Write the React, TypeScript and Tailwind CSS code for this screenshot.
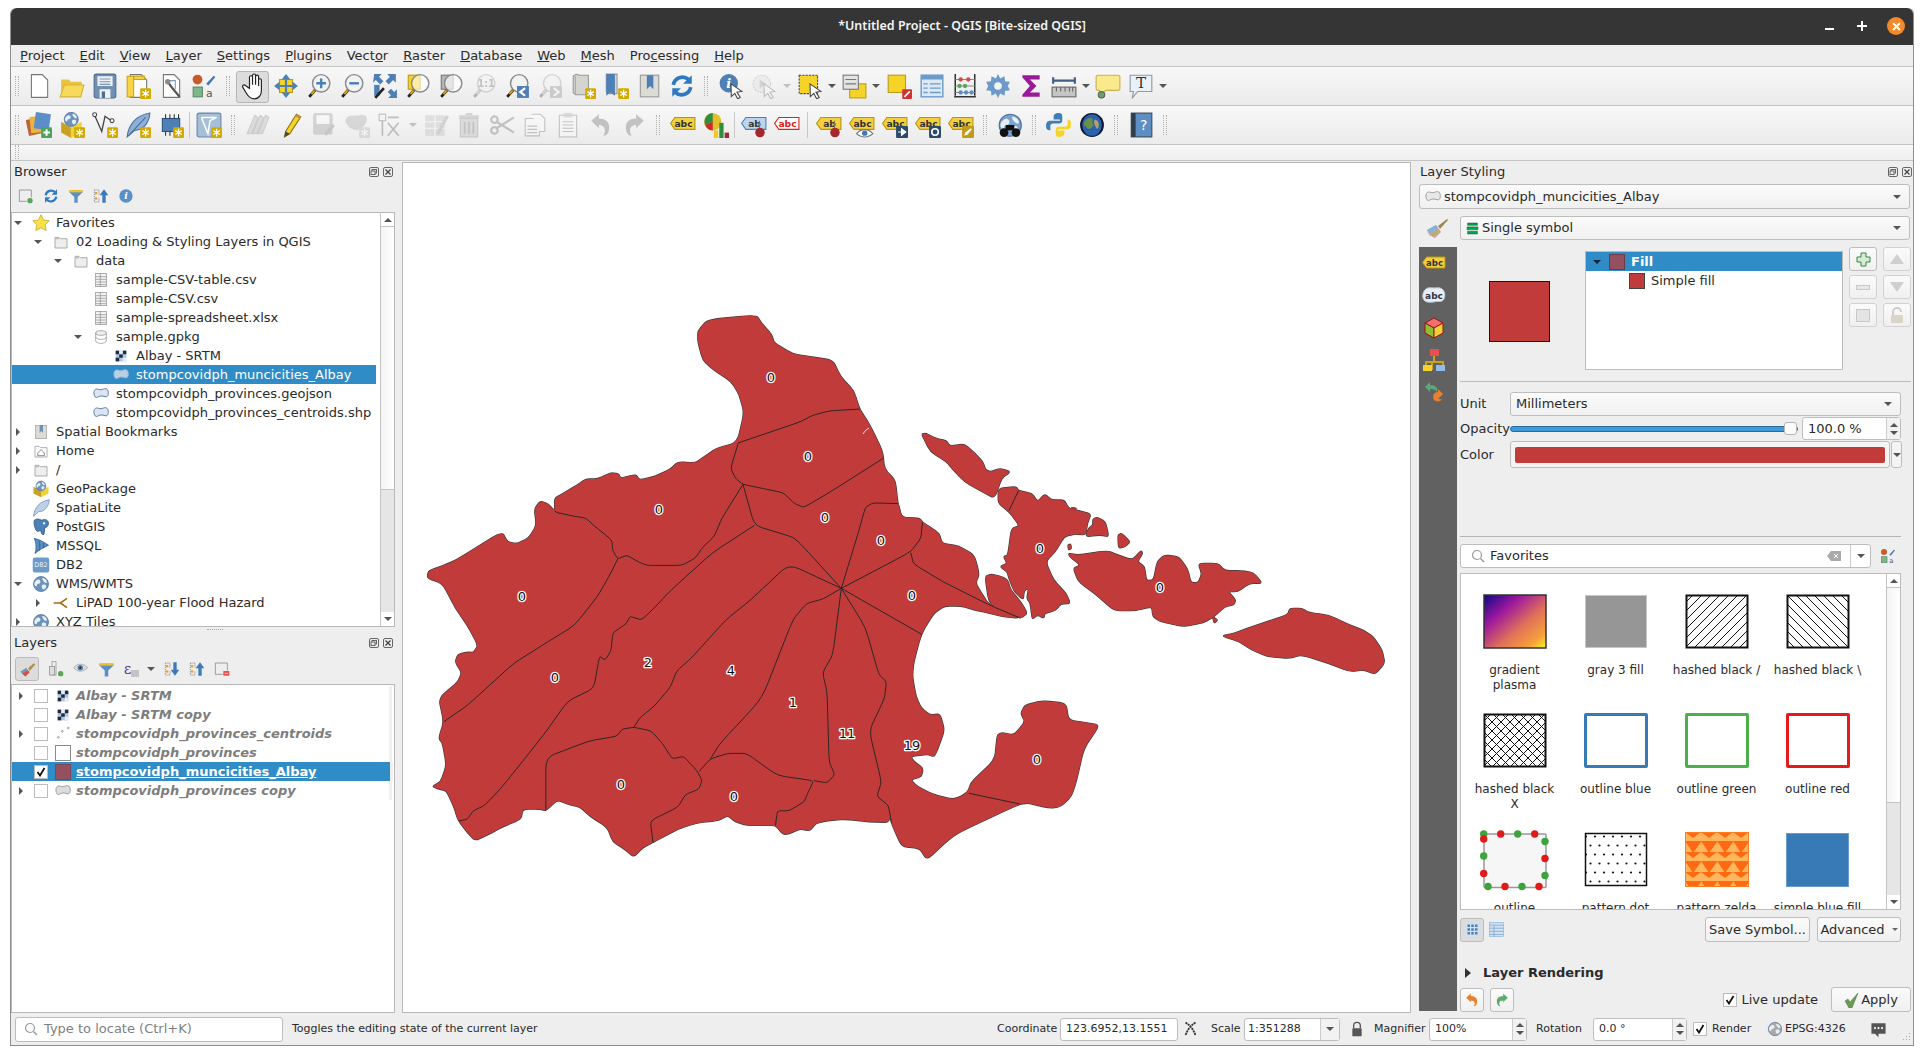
import type { ReactNode } from 'react';

const RED = '#c23b3b';

function Svg({ s = 24, children, off }: { s?: number; children: ReactNode; off?: boolean }) {
  return (
    <svg width={s} height={s} viewBox="0 0 24 24" className={`block shrink-0 ${off ? 'opacity-30 grayscale' : ''}`}>
      {children}
    </svg>
  );
}

const Badge = ({ c = '#d4a900' }: { c?: string }) => (
  <g>
    <rect x="14" y="14" width="10" height="10" rx="1" fill={c} />
    <path d="M19 15.5v7M16 17.2l6 3.6M22 17.2l-6 3.6" stroke="#fff" strokeWidth="1.2" />
  </g>
);
const Lens = ({ tint = '#f2f2f2', children }: { tint?: string; children?: ReactNode }) => (
  <g>
    <path d="M9 15 3 22" stroke="#222" strokeWidth="2.6" />
    <path d="M8 16 5 19.5" stroke="#e0a100" strokeWidth="2" />
    <circle cx="14" cy="9.5" r="8" fill={tint} stroke="#8a8a8a" strokeWidth="1.3" />
    {children}
  </g>
);
const Cursor = () => <path d="M12 10l10 7-4.5.6 3 5-2.4 1.2-2.6-5-3.2 3z" fill="#fff" stroke="#444" strokeWidth="1" />;
const Doc = () => <path d="M5 1.5h10l5 5v16H5z" fill="#fff" stroke="#777" />;
const Tag = ({ t = 'abc', c = '#f4d03f', b = '#b8960a', tc = '#333' }: { t?: string; c?: string; b?: string; tc?: string }) => (
  <g>
    <path d="M4.5 5H23v11H4.5L0.5 10.5z" fill={c} stroke={b} />
    <text x="12.5" y="13.8" fontSize="8.5" textAnchor="middle" fill={tc} fontFamily="DejaVu Sans" fontWeight="700">{t}</text>
  </g>
);
const Pin = () => <g><path d="M17 8v9" stroke="#777" /><circle cx="17.5" cy="19" r="4.4" fill="#a5282c" /></g>;
const Poly = ({ f = '#dbe4ef', b = '#55789e' }: { f?: string; b?: string }) => (
  <path d="M2 7C5 2 8 6 12 5.500 16 5 19 2 22 6c2 4 1 12-4 10-4-1.500-8-1.500-11.500 1C3 19 0 12 2 7z" fill={f} stroke={b} strokeWidth="1.400" />
);
const Globe = ({ c = '#6b93bd' }: { c?: string }) => (
  <g>
    <circle cx="12" cy="12" r="10" fill={c} stroke="#4d7199" />
    <path d="M5 8c3-3 5-2 6 0s-1 4-3 4-1 4-3 3-3-4 0-7zM14 4c3 0 6 3 6 6-2 1-3 0-4-1s-3-3-2-5zM14 13c3-1 5 0 5 2s-2 5-4 4-3-5-1-6z" fill="#e8eef5" />
  </g>
);
const Checker = () => (
  <g>
    <rect x="4" y="4" width="16" height="16" fill="#b4c6dc" />
    <rect x="4" y="4" width="5.300" height="5.300" fill="#1d2b44" />
    <rect x="14.600" y="4" width="5.400" height="5.300" fill="#1d2b44" />
    <rect x="9.300" y="9.300" width="5.300" height="5.300" fill="#1d2b44" />
    <rect x="4" y="14.600" width="5.300" height="5.400" fill="#1d2b44" />
    <rect x="14.600" y="14.600" width="5.400" height="5.400" fill="#e7edf5" />
    <rect x="9.300" y="4" width="5.300" height="5.300" fill="#e7edf5" />
  </g>
);
const Refresh = () => (
  <g fill="none" stroke="#2f79c2" strokeWidth="3.4">
    <path d="M4 11a8.500 8.500 0 0 1 14-5" />
    <path d="M20 13a8.500 8.500 0 0 1-14 5" />
    <path d="M21 2v8h-8z" fill="#2f79c2" stroke="none" />
    <path d="M3 22v-8h8z" fill="#2f79c2" stroke="none" />
  </g>
);
const Funnel = () => (
  <g>
    <path d="M2 4h20v2.500l-7.500 7v8.500h-5v-8.500L2 6.500z" fill="#5c8fc4" />
    <rect x="2" y="3" width="20" height="3.500" fill="#eec32a" />
  </g>
);
const Tree = ({ down }: { down?: boolean }) => (
  <g>
    <path d="M2 3h7v7M2 3v18h7v-6" fill="none" stroke="#777" strokeDasharray="2 1" />
    <rect x="3" y="6" width="3.500" height="3.500" fill="#e8a23a" />
    <rect x="3" y="14" width="3.500" height="3.500" fill="#e8a23a" />
    <path d={down ? 'M14 2h5v11h4l-6.500 9L10 13h4z' : 'M14 22h5V11h4L16.500 2 10 11h4z'} fill="#3f79b8" />
  </g>
);
const Brush = () => (
  <g>
    <path d="M2 14 11 9l5 7-6 6-6-3z" fill="#d8a0b0" />
    <path d="M2 14l9-5 2.500 3.500-9 5z" fill="#88b0dc" />
    <path d="M5 18l8-5 2.500 3-7 5z" fill="#b4b070" />
    <path d="M13 10 22 3l1 1-8 9z" fill="#a08a50" />
  </g>
);
const BrushLayer = () => (
  <g>
    <path d="M2 15l8-5 5 6-6 6z" fill="#e0a030" />
    <path d="M2 15l8-5 2.500 3-8 5z" fill="#6a9bd0" />
    <path d="M4.500 18l8-5 2.500 3-6 6z" fill="#d84a4a" />
    <path d="M13 10 21 3l2 2-8 9z" fill="#b0913f" />
  </g>
);
const Style = () => (
  <g>
    <circle cx="6" cy="6" r="4.500" fill="#c95a2b" />
    <path d="M14 10 21 2.500l1.500 1.200L16 11.500z" fill="#3f79b8" />
    <rect x="2" y="13" width="8.500" height="9" fill="#7fb58a" stroke="#5a8a64" />
    <text x="17" y="22" fontSize="10" textAnchor="middle" fill="#555" fontFamily="DejaVu Sans">a</text>
  </g>
);

const tb1: ReactNode[] = [
  <Svg s={26}><Doc /></Svg>,
  <Svg s={26}><path d="M2 6h7l2 2h10v3H6L2 21z" fill="#e8c33f" /><path d="M5 11h18l-3 11H1z" fill="#f7d95c" stroke="#d5b235" /></Svg>,
  <Svg s={26}><rect x="2" y="1" width="20" height="22" rx="2" fill="#6f8fb3" stroke="#4f6d90" /><rect x="5" y="3" width="14" height="9" fill="#eef2f6" /><path d="M7 5.500h10M7 8h10M7 10.500h10" stroke="#7b93ad" /><rect x="7" y="15" width="10" height="8" fill="#eef2f6" /><rect x="9" y="17" width="3" height="6" fill="#4f6d90" /></Svg>,
  <Svg s={26}><Doc /><rect x="2" y="3" width="6" height="19" fill="#f6d443" stroke="#c9a21f" /><rect x="8" y="3" width="10" height="3" fill="#f6d443" stroke="#c9a21f" /><Badge /></Svg>,
  <Svg s={26}><Doc /><path d="M9 7h7v8" fill="none" stroke="#7f9cc0" /><path d="M9 8c3 5 6 8 11 14" stroke="#555" strokeWidth="2" /><circle cx="9" cy="8" r="2.500" fill="#8a8a8a" /></Svg>,
  <Svg s={26}><Style /></Svg>,
  'g',
  <Svg s={28}><path d="M9 12V4.500a1.300 1.300 0 0 1 2.600 0V11V3a1.300 1.300 0 0 1 2.600 0v8V4a1.300 1.300 0 0 1 2.600 0v8V7a1.200 1.200 0 0 1 2.400 0v9c0 4-2.500 7-6 7s-5-1.500-7-5l-3-5c-.800-2 1.500-2.500 2.500-1.200L9 14z" fill="#fff" stroke="#222" strokeWidth="1" /></Svg>,
  <Svg s={26}><rect x="6" y="6" width="12" height="12" fill="#f5d327" stroke="#b89c1e" /><path d="M12 1l4 5H8zM12 23l-4-5h8zM1 12l5-4v8zM23 12l-5 4V8z" fill="#4e7fb5" /><path d="M12 6v12M6 12h12" stroke="#4e7fb5" strokeWidth="2" /></Svg>,
  <Svg s={26}><Lens><path d="M14 5v9M9.500 9.500h9" stroke="#4a7fb5" strokeWidth="2.200" /></Lens></Svg>,
  <Svg s={26}><Lens><path d="M9.500 9.500h9" stroke="#4a7fb5" strokeWidth="2.200" /></Lens></Svg>,
  <Svg s={26}><path d="M2 1h7L6.500 3.500l4 4-3 3-4-4L1 9zM22 1v8l-2.500-2.500-4 4-3-3 4-4L14 1zM23 23h-8l2.500-2.500-3-3 3-3 3 3L23 15z" fill="#4e7fb5" /><path d="M2 11h5v10H2z" fill="#4e7fb5" /><path d="M11 14 3 23" stroke="#222" strokeWidth="2.400" /></Svg>,
  <Svg s={26}><rect x="3" y="2" width="11" height="13" fill="#f5d327" stroke="#b89c1e" /><Lens tint="#ffffff99" /></Svg>,
  <Svg s={26}><rect x="3" y="2" width="11" height="13" fill="#b5b5b5" stroke="#777" /><Lens tint="#ffffffaa" /></Svg>,
  <Svg s={26} off><Lens><text x="14" y="13" fontSize="9" textAnchor="middle" fontFamily="DejaVu Sans" fontWeight="700" fill="#555">1:1</text></Lens></Svg>,
  <Svg s={26}><Lens /><rect x="12" y="12" width="11" height="11" fill="#4e7fb5" /><path d="M19.500 14 15 17.500l4.500 3.500" fill="none" stroke="#fff" strokeWidth="2" /></Svg>,
  <Svg s={26} off><Lens /><rect x="12" y="12" width="11" height="11" fill="#4e7fb5" /><path d="M15.500 14l4.500 3.500-4.500 3.500" fill="none" stroke="#fff" strokeWidth="2" /></Svg>,
  <Svg s={26}><path d="M3 3c2-2 4-2 5-1h9v18H5l-2-2z" fill="#d5d5cf" stroke="#999" /><path d="M5 3v16" stroke="#aaa" /><Badge /></Svg>,
  <Svg s={26}><path d="M3 1h10v18H6l-3-2z" fill="#d5d5cf" stroke="#999" /><path d="M3 1h8v20l-4-3-4 3z" fill="#4e7fb5" /><Badge /></Svg>,
  <Svg s={26}><rect x="4" y="2" width="17" height="20" fill="#dcdcd6" stroke="#999" /><path d="M10 2h6v13l-3-3-3 3z" fill="#4e7fb5" /></Svg>,
  <Svg s={26}><Refresh /></Svg>,
  'g',
  <Svg s={26}><circle cx="10" cy="9.500" r="8.500" fill="#4e7fb5" /><text x="10" y="14" fontSize="12" textAnchor="middle" fill="#fff" fontFamily="DejaVu Serif" fontStyle="italic" fontWeight="700">i</text><Cursor /></Svg>,
  <Svg s={26} off><circle cx="10" cy="10" r="8" fill="#ddd" stroke="#888" strokeDasharray="2 1" /><path d="M8 6l6 4-6 4z" fill="#888" /><Cursor /></Svg>,
  'd0',
  <Svg s={26}><rect x="2" y="2" width="17" height="17" fill="#f5d327" stroke="#444" strokeDasharray="2 1" /><Cursor /></Svg>,
  'd',
  <Svg s={26}><rect x="8" y="10" width="15" height="13" fill="#f5d327" stroke="#b89c1e" /><rect x="2" y="2" width="14" height="13" fill="#e3e3e3" stroke="#777" /><path d="M4 6h10M4 10h10" stroke="#777" /></Svg>,
  'd',
  <Svg s={26}><rect x="2" y="2" width="16" height="16" fill="#f5d327" stroke="#b89c1e" /><rect x="15" y="15" width="9" height="9" rx="1" fill="#d03030" /><path d="M17 22l5-5" stroke="#fff" strokeWidth="1.500" /></Svg>,
  <Svg s={26}><rect x="2" y="2" width="20" height="20" fill="#dce8f4" stroke="#6d9bc9" strokeWidth="1.300" /><rect x="2" y="2" width="20" height="4" fill="#6d9bc9" /><path d="M4 10h4M10 10h10M4 14h4M10 14h10M4 18h4M10 18h10" stroke="#6d9bc9" strokeWidth="1.300" /></Svg>,
  <Svg s={26}><path d="M3 1v20M21 1v20M2 22h20" stroke="#333" strokeWidth="1.400" /><path d="M3 6h18M3 12h18M3 18h18" stroke="#888" /><circle cx="8" cy="6" r="2" fill="#d04a4a" /><circle cx="15" cy="6" r="2" fill="#d04a4a" /><circle cx="7" cy="12" r="2" fill="#58a858" /><circle cx="12" cy="12" r="2" fill="#58a858" /><circle cx="8" cy="18" r="2" fill="#5b8fc7" /><circle cx="13" cy="18" r="2" fill="#5b8fc7" /><circle cx="18" cy="18" r="2" fill="#5b8fc7" /></Svg>,
  <Svg s={26}><path d="M12 1l2 4 4-2 .500 4.500L23 8l-2 4 2 4-4.500.500L18 21l-4-2-2 4-2-4-4 2-.500-4.500L1 16l2-4-2-4 4.500-.500L6 3l4 2z" fill="#6d9bc9" /><circle cx="12" cy="12" r="3.500" fill="#f4f4f4" /></Svg>,
  <Svg s={26}><path d="M4 2h16v4L11 6l6 6-6 6h9v4H4v-2l7-8-7-8z" fill="#9a1a9a" /></Svg>,
  <Svg s={26}><path d="M2 7h20M2 4v6M22 4v6" stroke="#3f5f85" strokeWidth="2" /><rect x="1" y="13" width="22" height="9" fill="#c5c5c5" stroke="#666" /><path d="M5 13v4M9 13v4M13 13v4M17 13v4M20 13v4" stroke="#666" /></Svg>,
  'd',
  <Svg s={26}><path d="M3 2h18a2 2 0 0 1 2 2v10a2 2 0 0 1-2 2H10l-4 3.500-2-3.500H3a2 2 0 0 1-2-2V4a2 2 0 0 1 2-2z" fill="#fbe98e" stroke="#c9b24a" /><circle cx="6" cy="20" r="3" fill="#6f9b6f" stroke="#4a6a4a" /></Svg>,
  <Svg s={26}><path d="M2 2h20v15H9l-5 6 1-6H2z" fill="#e9f1f6" stroke="#8b9aa5" /><text x="12" y="14" fontSize="14" textAnchor="middle" fill="#333" fontFamily="DejaVu Serif">T</text></Svg>,
  'd',
];

const tb2: ReactNode[] = [
  <Svg s={26}><rect x="1" y="6" width="13" height="15" fill="#c2623a" transform="rotate(-12 7 13)" /><rect x="4" y="4" width="13" height="15" fill="#e8b53f" transform="rotate(-6 10 12)" /><rect x="8" y="1" width="14" height="15" fill="#5b8fc7" transform="rotate(8 15 9)" /><rect x="14" y="14" width="10" height="10" rx="1" fill="#4ea35a" /><path d="M19 16v6M16 19h6" stroke="#fff" strokeWidth="1.800" /></Svg>,
  <Svg s={26}><path d="M2 9l9 5v10l-9-5z" fill="#c9a21f" /><path d="M11 14l10-5v10l-10 5z" fill="#f0d238" /><g transform="translate(3.500 -1) scale(.65)"><Globe /></g><Badge /></Svg>,
  <Svg s={26}><path d="M2 2l7 16L12 4l6 4" fill="none" stroke="#444" strokeWidth="1.200" /><circle cx="2.500" cy="2.500" r="1.800" fill="#fff" stroke="#444" /><circle cx="18.500" cy="8" r="1.800" fill="#fff" stroke="#444" /><Badge /></Svg>,
  <Svg s={26}><path d="M2 23C3 12 10 3 23 1c0 6-4 13-9 15l-5 1z" fill="#8eb0d8" stroke="#48709c" /><path d="M3 22 19 5" stroke="#48709c" /><Badge /></Svg>,
  <Svg s={26}><rect x="4" y="6" width="16" height="12" fill="#4e7fb5" stroke="#2d5480" /><path d="M7 2v4M11 2v4M15 2v4M19 2v4M7 18v4M11 18v4" stroke="#333" /><Badge /></Svg>,
  'sep',
  <Svg s={26}><rect x="1" y="1" width="22" height="22" rx="2" fill="#a6bed8" stroke="#6a87a6" /><path d="M5 5l6 15 2-12 6-3M5 5l14 0" fill="none" stroke="#fff" strokeWidth="1.400" /><Badge /></Svg>,
  'g',
  <Svg s={26} off><path d="M2 20 9 3l3 2-6 15zM7 20 14 3l3 2-6 15zM12 20 19 3l3 2-6 15z" fill="#aaa" stroke="#777" /></Svg>,
  <Svg s={26}><path d="M6 23l1-5L17 2l4 2.500L11 20z" fill="#f5d327" stroke="#8a7414" /><path d="M17 2l4 2.500-1 2-4-2.500z" fill="#d08a3a" /><path d="M6 23l1-5 4 2z" fill="#444" /></Svg>,
  <Svg s={26} off><rect x="2" y="1" width="18" height="20" rx="2" fill="#6f8fb3" /><rect x="5" y="3" width="12" height="8" fill="#fff" /><path d="M14 22l8-9-2-2-8 9z" fill="#666" /></Svg>,
  <Svg s={26} off><path d="M2 6c3-4 8-2 12-3s8 0 7 5-5 6-7 8-8 0-10-3-4-4-2-7z" fill="#999" /><Badge /></Svg>,
  <Svg s={26} off><rect x="2" y="2" width="6" height="6" fill="none" stroke="#444" /><path d="M10 5h10M5 8v14M10 10l10 12M20 10L10 22" stroke="#444" strokeWidth="1.500" /></Svg>,
  'd1',
  <Svg s={26} off><rect x="2" y="3" width="18" height="19" fill="#b8b48a" /><path d="M2 9h18M2 15h18M11 3v19" stroke="#fff" /><path d="M12 20 21 3l3 1-9 17z" fill="#888" /></Svg>,
  <Svg s={26} off><rect x="4" y="6" width="16" height="17" fill="#aaa" stroke="#666" /><rect x="3" y="3" width="18" height="3" fill="#888" /><rect x="9" y="1" width="6" height="2" fill="#888" /><path d="M8 9v11M12 9v11M16 9v11" stroke="#555" strokeWidth="1.500" /></Svg>,
  <Svg s={26} off><circle cx="5" cy="7" r="3" fill="none" stroke="#555" strokeWidth="2" /><circle cx="5" cy="17" r="3" fill="none" stroke="#555" strokeWidth="2" /><path d="M7 9l16 10M7 15l16-10" stroke="#555" strokeWidth="2" /></Svg>,
  <Svg s={26} off><path d="M3 6h9l4 4v12H3z" fill="#fff" stroke="#555" /><path d="M9 2h8l4 4v12h-5" fill="#fff" stroke="#555" /><path d="M5 13h9M5 16h9M5 19h9" stroke="#555" /></Svg>,
  <Svg s={26} off><rect x="4" y="3" width="16" height="20" fill="#fff" stroke="#555" /><rect x="8" y="1" width="8" height="4" fill="#999" /><path d="M7 9h10M7 12h10M7 15h10M7 18h10" stroke="#555" /></Svg>,
  <Svg s={26} off><path d="M3 8l7-6v4c7 0 11 4 9 12-1 3-3 4-5 4 3-4 2-10-4-10v3z" fill="#555" /></Svg>,
  <Svg s={26} off><path d="M21 8l-7-6v4C7 6 3 10 5 18c1 3 3 4 5 4-3-4-2-10 4-10v3z" fill="#555" /></Svg>,
  'g',
  <Svg s={26}><Tag /></Svg>,
  <Svg s={26}><circle cx="9" cy="9" r="8" fill="#e3c12e" /><path d="M9 9V1a8 8 0 0 0-7 11z" fill="#2f8f3f" /><path d="M9 9l-7 3a8 8 0 0 0 7 5z" fill="#c92a2a" /><rect x="10" y="17" width="4" height="7" fill="#f2c81e" /><rect x="15" y="10" width="4" height="14" fill="#2f8f3f" /><rect x="20" y="19" width="4" height="5" fill="#a5282c" /></Svg>,
  'sep',
  <Svg s={26}><Tag t="ab" c="#bcd4ee" b="#4e7fb5" /><Pin /></Svg>,
  <Svg s={26}><Tag c="#fff" b="#e02020" tc="#e02020" /></Svg>,
  'sep8',
  <Svg s={26}><Tag t="ab" /><Pin /></Svg>,
  <Svg s={26}><Tag /><path d="M7 20c4-5 11-5 15 0-4 4-11 4-15 0z" fill="#fff" stroke="#777" /><circle cx="14.500" cy="19.500" r="2.500" fill="#3f79b8" /></Svg>,
  <Svg s={26}><Tag /><rect x="13" y="13" width="11" height="11" rx="1" fill="#2c4a6a" /><path d="M15 18.500h4M18 15.500l4 3-4 3z" fill="#fff" stroke="#fff" /></Svg>,
  <Svg s={26}><Tag /><rect x="13" y="13" width="11" height="11" rx="1" fill="#2c4a6a" /><circle cx="18.500" cy="18.500" r="3" fill="none" stroke="#fff" strokeWidth="1.500" /></Svg>,
  <Svg s={26}><Tag /><rect x="13" y="13" width="11" height="11" rx="1" fill="#c49a16" /><path d="M15 22l1-3 5-4 1 1-4 5z" fill="#fff" /></Svg>,
  'g',
  <Svg s={26}><g transform="scale(1.02)"><Globe c="#7ba3cc" /></g><circle cx="6.500" cy="19" r="4" fill="#111" /><circle cx="17.500" cy="19" r="4" fill="#111" /><path d="M8 12h8v5H8z" fill="#111" /></Svg>,
  'g',
  <Svg s={26}><path d="M12 1c-4 0-5 1.500-5 4v2h6v1H4c-3 0-4 2-4 5s1.500 4 4 4V13c0-1.500 1-2.500 2.500-2.500H12c2 0 3-1 3-3V4c0-2-1-3-3-3z" fill="#3f7fb5" /><path d="M12 23c4 0 5-1.500 5-4v-2h-6v-1h9c2 0 3-2 3-5s-1-4-3-4v4c0 1.500-1 2.500-2.500 2.500H12c-2 0-3 1-3 3V20c0 2 1 3 3 3z" fill="#f5d327" /></Svg>,
  <Svg s={26}><circle cx="12" cy="12" r="11" fill="#101830" /><ellipse cx="12" cy="12" rx="9" ry="10" fill="#2a62b0" /><path d="M5 9c2-3 5-4 7-3s-1 4 1 5-3 6-5 4-5-3-3-6z" fill="#68924a" /><path d="M15 7c3 1 4 4 3 7s-2 1-3-1-2-5 0-6z" fill="#b0a070" /></Svg>,
  'g',
  <Svg s={26}><rect x="3" y="1" width="19" height="22" fill="#5d8fc4" stroke="#3a4a5a" /><rect x="3" y="1" width="4" height="22" fill="#2f3f4f" /><text x="14.500" y="17" fontSize="13" textAnchor="middle" fill="#fff" fontFamily="DejaVu Sans">?</text></Svg>,
  'g',
];

function Grip({ x = 6 }: { x?: number }) {
  return <span className="block h-[20px] w-[4px] shrink-0 border-x border-dotted border-[#b0b0b0]" style={{ marginLeft: x, marginRight: x }} />;
}

function Toolbar({ items, slot = 33, lead = 4, dot = 6 }: { items: ReactNode[]; slot?: number; lead?: number; dot?: number }) {
  return (
    <div className="flex items-center" style={{ paddingLeft: lead }}>
      <Grip x={0} />
      <span className="w-[3px]" />
      {items.map((it, i) => {
        if (it === 'g') return <Grip key={i} x={dot} />;
        if (it === 'sep') return <span key={i} className="mx-[2px] h-[26px] w-px shrink-0 bg-[#c8c8c8]" />;
        if (it === 'sep8') return <span key={i} className="mx-[4px] h-[26px] w-px shrink-0 bg-[#c8c8c8]" />;
        if (it === 'd' || it === 'd0' || it === 'd1')
          return (
            <span key={i} className={`flex shrink-0 justify-center ${it === 'd' ? 'w-[11.500px]' : 'w-[13px]'}`}>
              <span className={`h-0 w-0 border-x-[4px] border-t-[4px] border-x-transparent ${it === 'd' ? 'border-t-[#555]' : 'border-t-[#c0c0c0]'}`} />
            </span>
          );
        return (
          <span key={i} className="flex shrink-0 justify-center" style={{ width: slot }}>
            {it}
          </span>
        );
      })}
    </div>
  );
}

const menus: [string, string, string][] = [
  ['', 'P', 'roject'], ['', 'E', 'dit'], ['', 'V', 'iew'], ['', 'L', 'ayer'], ['', 'S', 'ettings'], ['', 'P', 'lugins'],
  ['Vect', 'o', 'r'], ['', 'R', 'aster'], ['', 'D', 'atabase'], ['', 'W', 'eb'], ['', 'M', 'esh'], ['Pro', 'c', 'essing'], ['', 'H', 'elp'],
];

function DockTitle({ title, cls }: { title: string; cls: string }) {
  return (
    <div className={`flex h-[23px] items-center justify-between pb-[2px] text-[13px] ${cls}`}>
      <span>{title}</span>
      <span className="flex gap-[4px]">
        <svg width="10" height="10" viewBox="0 0 10 10"><rect x=".5" y=".5" width="9" height="9" rx="1.500" fill="none" stroke="#666" /><rect x="3" y="2.500" width="4.500" height="3.500" fill="none" stroke="#666" /><rect x="2" y="4" width="4" height="3.500" fill="#eee" stroke="#666" /></svg>
        <svg width="10" height="10" viewBox="0 0 10 10"><rect x=".5" y=".5" width="9" height="9" rx="1.500" fill="none" stroke="#666" /><path d="M2.500 2.500l5 5M7.500 2.500l-5 5" stroke="#444" strokeWidth="1.300" /></svg>
      </span>
    </div>
  );
}

const Arrow = ({ dir }: { dir: 'down' | 'right' | 'up' }) =>
  dir === 'right' ? (
    <span className="h-0 w-0 border-y-[4px] border-l-[4px] border-y-transparent border-l-[#555]" />
  ) : dir === 'down' ? (
    <span className="h-0 w-0 border-x-[4px] border-t-[4px] border-x-transparent border-t-[#555]" />
  ) : (
    <span className="h-0 w-0 border-x-[4px] border-b-[4px] border-x-transparent border-b-[#555]" />
  );

const folder = <Svg s={16}><path d="M3 5h6l2 2h10v14H3z" fill="#eee" stroke="#8a8a8a" /><path d="M3 5h6v3H3z" fill="#bbb" /></Svg>;
const tableFile = <Svg s={16}><rect x="4" y="2" width="16" height="20" fill="#f2f2f2" stroke="#8a8a8a" /><path d="M4 7h16M4 11h16M4 15h16M4 19h16M11 2v20" stroke="#8a8a8a" /></Svg>;
const poly = <Svg s={16}><Poly /></Svg>;

const browser: { lv: number; t: string; a?: 'down' | 'right'; i: ReactNode; sel?: boolean }[] = [
  { lv: 0, t: 'Favorites', a: 'down', i: <Svg s={18}><path d="M12 1l3.300 7 7.700 1-5.500 5.300 1.400 7.700L12 18.300 5.100 22l1.400-7.700L1 9l7.700-1z" fill="#f7e24a" stroke="#c9a21f" /></Svg> },
  { lv: 1, t: '02 Loading & Styling Layers in QGIS', a: 'down', i: folder },
  { lv: 2, t: 'data', a: 'down', i: folder },
  { lv: 3, t: 'sample-CSV-table.csv', i: tableFile },
  { lv: 3, t: 'sample-CSV.csv', i: tableFile },
  { lv: 3, t: 'sample-spreadsheet.xlsx', i: tableFile },
  { lv: 3, t: 'sample.gpkg', a: 'down', i: <Svg s={16}><ellipse cx="12" cy="6" rx="8" ry="3.500" fill="#eee" stroke="#8a8a8a" /><path d="M4 6v12c0 2 3.500 3.500 8 3.500s8-1.500 8-3.500V6M4 12c0 2 3.500 3.500 8 3.500s8-1.500 8-3.500" fill="none" stroke="#8a8a8a" /></Svg> },
  { lv: 4, t: 'Albay - SRTM', i: <Svg s={16}><Checker /></Svg> },
  { lv: 4, t: 'stompcovidph_muncicities_Albay', i: <Svg s={16}><Poly f="#b8cfe6" b="#9bb8d6" /></Svg>, sel: true },
  { lv: 3, t: 'stompcovidph_provinces.geojson', i: poly },
  { lv: 3, t: 'stompcovidph_provinces_centroids.shp', i: poly },
  { lv: 0, t: 'Spatial Bookmarks', a: 'right', i: <Svg s={16}><rect x="4" y="2" width="16" height="20" fill="#dcdcd6" stroke="#999" /><path d="M10 2h5v11l-2.500-2.500L10 13z" fill="#6f8fb3" /></Svg> },
  { lv: 0, t: 'Home', a: 'right', i: <Svg s={16}><path d="M3 5h6l2 2h10v14H3z" fill="#fff" stroke="#8a8a8a" /><path d="M7 15l5-5 5 5v4H7z" fill="none" stroke="#555" /></Svg> },
  { lv: 0, t: '/', a: 'right', i: folder },
  { lv: 0, t: 'GeoPackage', i: <Svg s={18}><path d="M2 9l10 5v9L2 18z" fill="#c9a21f" /><path d="M12 14l10-5v9l-10 5z" fill="#f0d238" /><g transform="translate(4 0) scale(.66)"><Globe /></g></Svg> },
  { lv: 0, t: 'SpatiaLite', i: <Svg s={18}><path d="M2 23C3 12 10 3 23 1c0 6-4 13-9 15l-5 1z" fill="#bcd0e6" stroke="#6a90b8" /></Svg> },
  { lv: 0, t: 'PostGIS', i: <Svg s={18}><path d="M3 3c4-3 8-1 10 0 3-2 9-1 9 4 0 4-3 6-5 6l-1 9c-3 1-4-2-4-5-3 0-4 2-6 0S2 7 3 3z" fill="#4e7fb5" stroke="#2d5480" /><circle cx="16" cy="7" r="1.500" fill="#fff" /></Svg> },
  { lv: 0, t: 'MSSQL', i: <Svg s={18}><path d="M3 2c6 1 12 4 19 9-6 3-13 6-18 11 2-6 2-14-1-20z" fill="#5b8fc7" stroke="#2d5480" /><path d="M9 5c2 5 2 9 0 14M15 8c1 2 1 5 0 7" stroke="#2d5480" fill="none" /></Svg> },
  { lv: 0, t: 'DB2', i: <Svg s={18}><rect x="1" y="2" width="22" height="20" rx="3" fill="#6d9bc9" /><text x="12" y="15" fontSize="8.500" textAnchor="middle" fill="#e8eef5" fontFamily="DejaVu Sans">DB2</text></Svg> },
  { lv: 0, t: 'WMS/WMTS', a: 'down', i: <Svg s={18}><Globe /></Svg> },
  { lv: 1, t: 'LiPAD 100-year Flood Hazard', a: 'right', i: <Svg s={16}><path d="M1 12h10M21 5L11 12l10 7" fill="none" stroke="#a86a16" strokeWidth="2.400" /></Svg> },
  { lv: 0, t: 'XYZ Tiles', a: 'right', i: <Svg s={18}><Globe /></Svg> },
];

function BrowserPanel() {
  return (
    <div className="flex h-[466px] flex-col">
      <DockTitle title="Browser" cls="pl-[3px] pr-[6px]" />
      <div className="flex h-[28px] items-center gap-[9px] pb-[4px] pl-[7px]">
        <Svg s={16}><path d="M2 20V3h18v11" fill="none" stroke="#777" /><path d="M2 20h11" stroke="#777" /><circle cx="18" cy="19" r="4" fill="#5ca35c" /></Svg>
        <Svg s={16}><Refresh /></Svg>
        <Svg s={16}><Funnel /></Svg>
        <Svg s={16}><Tree /></Svg>
        <Svg s={16}><circle cx="12" cy="12" r="10" fill="#5b8fc7" /><text x="12" y="17" fontSize="14" textAnchor="middle" fill="#fff" fontFamily="DejaVu Serif" fontStyle="italic" fontWeight="700">i</text></Svg>
      </div>
      <div className="flex h-[415px] w-[384px] border border-[#b8b8b8] bg-white">
        <div className="min-w-0 flex-1 overflow-hidden">
          {browser.map((r) => (
            <div key={r.t} className={`relative flex h-[19px] items-center whitespace-nowrap ${r.sel ? 'mr-[4px] bg-[#308cc6] text-white' : ''}`}>
              <span className="flex w-[10px] shrink-0 justify-center" style={{ marginLeft: r.lv * 20 + 1 }}>
                {r.a && <Arrow dir={r.a} />}
              </span>
              <span className="flex w-[32px] shrink-0 items-center justify-center pl-[4px]">{r.i}</span>
              <span className="ml-[1px]">{r.t}</span>
            </div>
          ))}
        </div>
        <Scroll h={415} thumb={263} />
      </div>
    </div>
  );
}

function Scroll({ h, thumb }: { h: number; thumb: number }) {
  return (
    <div className="flex w-[14px] shrink-0 flex-col border-l border-[#c4c4c4] bg-[#e6e6e6]" style={{ height: h - 2 }}>
      <div className="flex h-[14px] items-center justify-center border-b border-[#c4c4c4] bg-white"><Arrow dir="up" /></div>
      <div className="border-b border-[#c4c4c4] bg-gradient-to-r from-[#f4f4f4] to-[#ffffff]" style={{ height: thumb }} />
      <div className="flex-1" />
      <div className="flex h-[14px] items-center justify-center bg-white"><Arrow dir="down" /></div>
    </div>
  );
}

const layers: { t: string; a?: boolean; i: ReactNode; sel?: boolean }[] = [
  { t: 'Albay - SRTM', a: true, i: <Svg s={16}><Checker /></Svg> },
  { t: 'Albay - SRTM copy', i: <Svg s={16}><Checker /></Svg> },
  { t: 'stompcovidph_provinces_centroids', a: true, i: <Svg s={16}><circle cx="11" cy="8" r="1.300" fill="none" stroke="#777" /><circle cx="20" cy="3" r="1.300" fill="none" stroke="#777" /><circle cx="5" cy="17" r="1.300" fill="none" stroke="#777" /></Svg> },
  { t: 'stompcovidph_provinces', i: <span className="block h-[16px] w-[16px] border border-[#8a8a8a] bg-white" /> },
  { t: 'stompcovidph_muncicities_Albay', sel: true, i: <span className="block h-[16px] w-[16px] border border-[#7a4a5a] bg-[#95505f]" /> },
  { t: 'stompcovidph_provinces copy', a: true, i: <Svg s={16}><Poly f="#ddd" b="#999" /></Svg> },
];

function Check({ on }: { on?: boolean }) {
  return (
    <span className="flex h-[14px] w-[14px] shrink-0 items-center justify-center border border-[#bcbcbc] bg-white">
      {on && <svg width="10" height="10" viewBox="0 0 10 10"><path d="M1.500 5l2.500 3.500L8.500 1" fill="none" stroke="#111" strokeWidth="1.800" /></svg>}
    </span>
  );
}

function LayersPanel() {
  return (
    <div className="flex min-h-0 flex-1 flex-col">
      <div className="flex h-[5px] items-center justify-center"><span className="ml-[20px] w-[16px] border-t border-dotted border-[#aaa]" /></div>
      <DockTitle title="Layers" cls="pl-[3px] pr-[6px]" />
      <div className="flex h-[28px] items-center gap-[9px] pl-[4px]">
        <span className="flex h-[24px] w-[24px] items-center justify-center rounded-[3px] border border-[#bbb] bg-[#dcdcdc]"><Svg s={17}><BrushLayer /></Svg></span>
        <Svg s={16}><rect x="6" y="1" width="6" height="20" fill="none" stroke="#888" /><rect x="2" y="8" width="8" height="13" fill="#ddd" stroke="#888" /><circle cx="19" cy="19" r="4" fill="#5ca35c" /></Svg>
        <Svg s={16}><path d="M1 10c6-7 14-7 21 0-7 7-15 7-21 0z" fill="#ddd" stroke="#999" /><circle cx="11" cy="10" r="4" fill="#4a7fb5" /><circle cx="11" cy="10" r="1.500" fill="#222" /></Svg>
        <Svg s={17}><Funnel /></Svg>
        <span className="flex items-center gap-[3px]">
          <span className="flex w-[20px] items-start"><span className="font-['DejaVu_Serif'] text-[14px] leading-[14px] text-[#5a2a7a]">ε</span><span className="mt-[8px] h-[7px] w-[8px] bg-[#c4c4c4]" /></span>
          <Arrow dir="down" />
        </span>
        <Svg s={16}><Tree down /></Svg>
        <Svg s={16}><Tree /></Svg>
        <Svg s={16}><path d="M2 20V3h18v11" fill="none" stroke="#777" /><path d="M2 20h11" stroke="#777" /><rect x="14" y="15" width="9" height="7" fill="#e65050" /><path d="M16 18.500h5" stroke="#fff" /></Svg>
      </div>
      <div className="mt-[1px] min-h-0 w-[384px] flex-1 border border-[#b8b8b8] bg-white pt-[1px]">
        {layers.map((l) => (
          <div key={l.t} className={`relative flex h-[19px] items-center whitespace-nowrap border-r-[3px] ${l.sel ? 'mr-px border-r-[#f0f0f0] bg-[#308cc6] text-white' : 'mr-[2px] border-r-[#f0f0f0] text-[#7d7d7d]'}`}>
            <span className="flex w-[14px] shrink-0 justify-center pl-[4px]">{l.a && <Arrow dir="right" />}</span>
            <span className="ml-[8px]"><Check on={l.sel} /></span>
            <span className="ml-[7px] flex w-[16px] justify-center">{l.i}</span>
            <span className={`ml-[5px] font-bold ${l.sel ? 'underline' : 'italic'}`}>{l.t}</span>
          </div>
        ))}
      </div>
    </div>
  );
}

// rounds the corners of a traced outline so the coast does not read as straight segments
function smooth(d: string, k = 0.3) {
  const n = (d.match(/-?\d+(\.\d+)?/g) ?? []).map(Number);
  const pts: [number, number][] = [];
  for (let i = 0; i < n.length; i += 2) pts.push([n[i], n[i + 1]]);
  const closed = d.trim().endsWith('Z');
  const out: string[] = [];
  const m = pts.length;
  pts.forEach((c, i) => {
    const atEnd = !closed && (i === 0 || i === m - 1);
    if (atEnd) {
      out.push(`${i === 0 ? 'M' : 'L'}${c[0]},${c[1]}`);
      return;
    }
    const p = pts[(i - 1 + m) % m];
    const q = pts[(i + 1) % m];
    const a = [c[0] + (p[0] - c[0]) * k, c[1] + (p[1] - c[1]) * k];
    const b = [c[0] + (q[0] - c[0]) * k, c[1] + (q[1] - c[1]) * k];
    out.push(`${out.length ? 'L' : 'M'}${a[0]},${a[1]} Q${c[0]},${c[1]} ${b[0]},${b[1]}`);
  });
  return out.join(' ') + (closed ? ' Z' : '');
}

const west = smooth(
  'M778,54 L905,41 L920,65 L945,95 L952,118 L1000,148 L1040,155 L1105,165 L1125,210 L1160,250 L1175,300 L1200,340 L1235,415 L1240,465 L1268,495 L1275,560 L1285,600 L1280,900 L1260,1300 L1258,1437 L1200,1435 L1140,1428 L1090,1432 L1060,1440 L1045,1460 L1020,1455 L990,1468 L975,1470 L955,1445 L925,1445 L880,1445 L850,1435 L830,1418 L805,1432 L750,1438 L700,1455 L635,1492 L610,1505 L585,1532 L560,1510 L530,1490 L515,1450 L470,1420 L445,1395 L415,1388 L385,1375 L355,1405 L340,1400 L295,1400 L290,1428 L240,1450 L205,1470 L170,1487 L150,1465 L125,1430 L115,1395 L95,1350 L75,1345 L58,1338 L80,1325 L95,1280 L85,1220 L75,1205 L88,1160 L75,1095 L125,1050 L135,1025 L118,995 L125,975 L150,968 L165,970 L178,950 L150,895 L120,850 L85,780 L45,765 L48,745 L100,725 L125,712 L240,637 L255,665 L278,670 L310,655 L330,620 L325,575 L340,553 L360,560 L378,580 L378,545 L395,535 L435,510 L460,492 L490,492 L525,475 L545,478 L550,490 L590,480 L600,495 L640,485 L680,465 L700,445 L745,448 L770,430 L800,408 L855,392 L873,310 L860,260 L840,225 L790,190 L765,165 L752,115 L752,85 Z',
);
const eastParts = [
  'M120,250 L135,250 L145,292 L195,295 L205,308 L250,340 L258,370 L305,378 L348,405 L362,462 L352,490 L372,525 L388,552 L478,595 L430,590 L350,570 L310,558 L265,558 L235,580 L200,640 L178,730 L175,770 L185,830 L200,865 L225,885 L252,882 L265,930 L245,990 L235,1010 L215,1003 L170,1010 L180,1025 L205,1045 L200,1070 L170,1080 L190,1100 L230,1122 L285,1138 L310,1130 L330,1115 L340,1085 L405,1020 L412,945 L425,938 L460,945 L490,905 L478,880 L490,855 L540,842 L605,850 L612,900 L660,908 L700,915 L655,985 L635,1080 L620,1130 L590,1160 L560,1165 L500,1150 L475,1152 L300,1240 L265,1270 L215,1320 L195,1285 L145,1280 L120,1220 L115,1205 L100,1100 L80,900 L50,600 Z',
  'M378,470 L395,462 L425,470 L442,480 L450,510 L478,545 L497,580 L478,595 L390,555 Z',
  'M415,205 L465,200 L472,212 L510,220 L525,245 L545,222 L565,240 L600,240 L612,265 L640,272 L675,282 L665,310 L660,345 L630,342 L600,350 L575,395 L548,425 L570,480 L605,520 L617,550 L590,552 L575,572 L545,580 L543,595 L525,585 L510,598 L505,550 L495,535 L500,505 L488,512 L485,540 L460,515 L445,475 L440,455 L420,440 L440,430 L430,410 L442,405 L452,325 L475,318 L445,275 L415,250 Z',
  'M660,350 L668,325 L680,315 L680,297 L692,292 L715,305 L725,350 L700,345 Z',
  'M750,345 L760,340 L785,365 L770,380 L752,385 Z',
  'M620,262 L635,265 L625,270 Z',
  'M610,375 L618,372 L620,385 L612,390 Z',
  'M1015,590 L1030,600 L1020,610 Z',
  'M200,42 L212,40 L240,55 L270,62 L280,78 L320,72 L350,100 L372,125 L380,150 L395,155 L420,145 L450,155 L425,175 L405,235 L370,215 L320,185 L285,145 L270,125 L225,95 Z',
  'M612,400 L640,405 L720,392 L750,405 L790,420 L815,392 L820,400 L805,425 L825,440 L830,482 L850,480 L860,425 L880,405 L920,410 L945,445 L955,488 L975,488 L985,462 L975,430 L1030,430 L1050,452 L1095,452 L1130,458 L1155,490 L1120,490 L1085,515 L1060,515 L1080,540 L1075,555 L1050,560 L1020,590 L990,608 L935,620 L870,605 L848,590 L845,560 L800,572 L740,572 L690,525 L640,485 L625,445 L645,435 L615,410 Z',
  'M1040,648 L1075,640 L1125,620 L1225,585 L1232,565 L1265,565 L1285,578 L1340,585 L1400,615 L1440,632 L1465,650 L1490,690 L1498,730 L1470,763 L1440,750 L1400,755 L1340,730 L1265,705 L1230,715 L1170,710 L1125,690 L1090,665 Z',
].map((d) => smooth(d));
const westLines = [
  'M858,393 L1020,335 L1050,318 L1095,305 L1175,300',
  'M858,393 L838,462 L850,490 L870,507 L920,518 L975,530 L1005,560 L1028,570 L1050,558 L1110,520 L1237,435',
  'M870,507 L900,620 L1000,652 L1020,670 L1127,793',
  'M870,507 L815,600 L795,650 L765,680 L745,710 L710,730 L620,730 L600,722 L567,702 L543,712 L530,690 L527,660 L480,620 L460,600 L430,595 L385,585 L378,580',
  'M900,620 L790,695 L680,800 L640,845 L605,880 L575,870 L565,890 L530,915 L525,965 L510,990 L495,980 L480,1068 L412,1103 L350,1195 L240,1340 L195,1390 L165,1405 L150,1428 L128,1433',
  'M543,712 L520,760 L490,815 L430,895 L345,950 L270,1000 L150,1115 L88,1160',
  'M1127,793 L990,726 L890,825 L825,880 L735,985 L697,1020 L680,1065 L640,1115 L600,1150 L585,1175',
  'M355,1405 L355,1258 L470,1212 L540,1200 L555,1180 L585,1175 L630,1185 L660,1220 L685,1262 L715,1255 L750,1295 L763,1322 L755,1345 L720,1360 L700,1395 L628,1432 L635,1492',
  'M755,1297 L785,1262 L830,1247 L880,1247 L960,1308 L1055,1322 L1040,1355 L1030,1380 L990,1405 L960,1405 L955,1445',
  'M785,1262 L810,1220 L920,1095 L1000,880 L1035,835 L1080,822 L1127,793',
  'M1127,793 L1105,975 L1078,1025 L1090,1080 L1095,1270 L1110,1305 L1090,1328 L1055,1322',
  'M1127,793 L1190,900 L1225,1030 L1245,1050 L1240,1095 L1200,1185 L1232,1325 L1220,1365 L1250,1390 L1258,1437',
  'M1127,793 L1170,645 L1190,570 L1210,558 L1275,560',
  'M1127,793 L1308,693 L1335,655 L1339,612',
  'M1127,793 L1338,920',
];
const eastLines = ['M170,398 L178,432 L260,485 L390,555 L478,595', 'M333,1120 L475,1152', 'M472,212 L445,272'];
const labels: [number, number, string][] = [
  [771, 377, '0'], [808, 456, '0'], [659, 509, '0'], [825, 517, '0'], [881, 540, '0'], [522, 596, '0'], [912, 595, '0'], [555, 677, '0'],
  [648, 662, '2'], [731, 670, '4'], [793, 702, '1'], [847, 733, '11'], [912, 745, '19'], [621, 784, '0'], [734, 796, '0'],
  [1040, 548, '0'], [1160, 587, '0'], [1037, 759, '0'],
];

function MapView() {
  const wt = 'translate(410 300) scale(.3827 .3636)';
  const et = 'translate(850 420) scale(.3571 .3333)';
  const line = { vectorEffect: 'non-scaling-stroke' as const };
  return (
    <svg viewBox="403 163 1007 849" width="1007" height="849" className="block">
      <g stroke="#3a3a3a" strokeWidth="1.300" strokeLinejoin="round" fill={RED}>
        <path d={west} transform={wt} style={line} />
        <g transform={et}>{eastParts.map((d) => <path key={d} d={d} style={line} />)}</g>
      </g>
      <g fill={RED}>
        <path d={west} transform={wt} />
        <g transform={et}>{eastParts.map((d) => <path key={d} d={d} />)}</g>
      </g>
      <g fill="none" stroke="#2e2626" strokeWidth="1">
        <g transform={wt}>{westLines.map((d) => <path key={d} d={smooth(d, 0.2)} style={line} />)}</g>
        <g transform={et}>{eastLines.map((d) => <path key={d} d={smooth(d, 0.2)} style={line} />)}</g>
      </g>
      <path d="M863 434q2-4 6-6" fill="none" stroke="#fff" strokeWidth=".8" />
      <g fontFamily="DejaVu Sans" fontSize="13" textAnchor="middle">
        {labels.map(([x, y, t]) => (
          <text key={`${x}${y}`} x={x} y={y + 5} fill="#111" stroke="#fff" strokeWidth="2.600" paintOrder="stroke" strokeLinejoin="round">{t}</text>
        ))}
      </g>
    </svg>
  );
}

function Combo({ children, w, h = 24, cls = '' }: { children: ReactNode; w: number; h?: number; cls?: string }) {
  return (
    <div className={`flex items-center justify-between rounded-[3px] border border-[#bdbdbd] bg-gradient-to-b from-[#fbfbfb] to-[#f0f0f0] pl-[5px] pr-[8px] ${cls}`} style={{ width: w, height: h }}>
      <span className="flex items-center gap-[3px] whitespace-nowrap">{children}</span>
      <Arrow dir="down" />
    </div>
  );
}

function Btn({ children, off, w = 28, h = 24, active }: { children?: ReactNode; off?: boolean; w?: number; h?: number; active?: boolean }) {
  return (
    <span className={`flex items-center justify-center rounded-[3px] border ${off ? 'border-[#d2d2d2]' : 'border-[#bdbdbd]'} ${active ? 'bg-[#dcdcdc]' : 'bg-gradient-to-b from-[#fbfbfb] to-[#f0f0f0]'}`} style={{ width: w, height: h }}>
      {children}
    </span>
  );
}

function Spin({ children, w, h = 23, cls = '' }: { children: ReactNode; w: number; h?: number; cls?: string }) {
  return (
    <div className={`flex items-center rounded-[3px] border border-[#bdbdbd] bg-white ${cls}`} style={{ width: w, height: h }}>
      <span className="flex-1 pl-[5px]">{children}</span>
      <span className="flex h-full w-[14px] flex-col items-center justify-center gap-[4px] border-l border-[#ccc] bg-[#f2f2f2]">
        <Arrow dir="up" />
        <Arrow dir="down" />
      </span>
    </div>
  );
}

const hatch = (id: string, body: ReactNode, ph = 9, sw = 2) => (
  <svg width="64" height="55" viewBox="0 0 64 55" className="block">
    <defs><pattern id={id} width="9" height={ph} patternUnits="userSpaceOnUse">{body}</pattern></defs>
    <rect x="1.500" y="1.500" width="61" height="52" fill={`url(#${id})`} stroke="#111" strokeWidth={sw} />
  </svg>
);

const swatches: { t: string; i: ReactNode }[] = [
  {
    t: 'gradient\nplasma',
    i: (
      <svg width="64" height="55" viewBox="0 0 64 55" className="block">
        <defs>
          <linearGradient id="plasma" x1="0" y1="0" x2="1" y2="1">
            <stop offset="0" stopColor="#0d0887" /><stop offset=".3" stopColor="#9c179e" /><stop offset=".6" stopColor="#e0705a" /><stop offset=".85" stopColor="#f7a13a" /><stop offset="1" stopColor="#f0f921" />
          </linearGradient>
        </defs>
        <rect x="1" y="1" width="62" height="53" fill="url(#plasma)" stroke="#333" strokeWidth="1.500" />
      </svg>
    ),
  },
  { t: 'gray 3 fill', i: <div className="h-[53px] w-[62px] border border-[#c4c4c4] bg-[#969696]" /> },
  { t: 'hashed black /', i: hatch('h1', <path d="M-1 1l2-2M0 9l9-9M8 10l2-2" stroke="#111" strokeWidth="1" />) },
  { t: 'hashed black \\', i: hatch('h2', <path d="M-1 8l2 2M0 0l9 9M8-1l2 2" stroke="#111" strokeWidth="1" />) },
  {
    t: 'hashed black\nX',
    i: hatch('h3', <path d="M-1 1l2-2M0 9l9-9M8 10l2-2M-1 8l2 2M0 0l9 9M8-1l2 2" stroke="#111" strokeWidth="1" />),
  },
  { t: 'outline blue', i: <div className="h-[55px] w-[64px] rounded-[2px] border-[3px] border-[#377ab5] bg-white" /> },
  { t: 'outline green', i: <div className="h-[55px] w-[64px] rounded-[2px] border-[3px] border-[#4daf4a] bg-white" /> },
  { t: 'outline red', i: <div className="h-[55px] w-[64px] rounded-[2px] border-[3px] border-[#e41a1c] bg-white" /> },
  {
    t: 'outline',
    i: (
      <svg width="66" height="60" viewBox="0 0 66 60" className="block overflow-visible">
        <rect x="2" y="4" width="62" height="53.500" rx="1" fill="#f6f6f6" stroke="#999" strokeWidth="1.500" />
        {[[1.7, 4], [35.7, 4], [63, 11.5], [63, 45.5], [40, 56.5], [6, 56.5], [1.7, 26]].map(([x, y]) => <circle key={`g${x}${y}`} cx={x} cy={y} r="3.700" fill="#3ea33e" />)}
        {[[1.7, 9], [18.7, 4], [52.7, 4], [63, 28.5], [57, 56.5], [23, 56.5], [1.7, 43.5]].map(([x, y]) => <circle key={`r${x}${y}`} cx={x} cy={y} r="3.700" fill="#e01a1a" />)}
      </svg>
    ),
  },
  { t: 'pattern dot', i: hatch('h4', <g fill="#111"><circle cx="2" cy="4.500" r="1.100" /><circle cx="6.500" cy="13.500" r="1.100" /></g>, 18, 1.500) },
  {
    t: 'pattern zelda',
    i: (
      <svg width="64" height="55" viewBox="0 0 64 55" className="block">
        <defs>
          <pattern id="zelda" width="16" height="20" patternUnits="userSpaceOnUse">
            <path d="M0 9h16v1l-8 11zM0 0h16l-8 6z" fill="#ff6a13" />
          </pattern>
        </defs>
        <rect width="64" height="55" fill="#ffb65c" />
        <rect y="1" width="64" height="54" fill="url(#zelda)" />
        <rect x=".5" y=".5" width="63" height="54" fill="none" stroke="#ff7a20" />
      </svg>
    ),
  },
  { t: 'simple blue fill', i: <div className="h-[54px] w-[63px] border border-[#6d9bc9] bg-[#377ab5]" /> },
];

function StylingPanel() {
  return (
    <div className="w-[502px] shrink-0 pl-[8px]">
      <DockTitle title="Layer Styling" cls="pl-[1px] pr-[1px]" />
      <Combo w={491} h={25}>
        <Svg s={16}><Poly f="#e8e8e8" b="#999" /></Svg>
        stompcovidph_muncicities_Albay
      </Combo>
      <div className="mt-[7px] flex items-center">
        <span className="flex w-[41px] justify-center pr-[6px]"><Svg s={24}><Brush /></Svg></span>
        <Combo w={450}>
          <Svg s={13}><path d="M3 2h18v4H3zM2 9h20v5H2zM3 17h18v5H3z" fill="#00a651" stroke="#0a5a32" /></Svg>
          Single symbol
        </Combo>
      </div>
      <div className="mt-[7px] flex">
        <div className="flex h-[764px] w-[38px] shrink-0 flex-col items-center gap-[8px] bg-[#616161] pr-[8px] pt-[5px]">
          <Svg s={24}><Tag t="abc" /></Svg>
          <Svg s={24}><path d="M3 6c2-3 6-2 9-2s7-1 9 2c3 3 2 10-1 11-3 1-6 0-8 1-3 0-6 1-9-1C0 15 0 9 3 6z" fill="#e8eef5" stroke="#c0c8d0" /><text x="12" y="15" fontSize="9" textAnchor="middle" fontWeight="700" fontFamily="DejaVu Sans" fill="#334">abc</text></Svg>
          <Svg s={24}><path d="M12 2l9 5-9 5-9-5z" fill="#f07070" stroke="#a01010" /><path d="M3 7l9 5v10l-9-5z" fill="#90c030" stroke="#a01010" /><path d="M21 7l-9 5v10l9-5z" fill="#f0d238" stroke="#a01010" /></Svg>
          <Svg s={24}><rect x="8" y="1" width="9" height="7" fill="#e65050" /><path d="M12 8v6M4 20v-6h17v6M10 14v8" stroke="#c9a21f" strokeWidth="2" fill="none" /><rect x="1" y="17" width="9" height="6" fill="#f5d327" /><rect x="14" y="17" width="9" height="6" fill="#8fbce8" /></Svg>
          <Svg s={24}><path d="M3 7l5-5v3c6 0 8 3 7 7-2-3-4-3-7-3v3z" fill="#58a878" /><path d="M21 14l-5-5v3c-4 0-6 4-4 8 2 2 7 2 8-1-2 1-4 0-4-3v3z" fill="#e88030" /></Svg>
        </div>
        <div className="ml-[3px] w-[451px]">
          <div className="flex h-[135px] border-b border-[#bcbcbc]">
            <div className="ml-[29px] mt-[34px] h-[61px] w-[61px] border border-[#231010] bg-[#c23b3b]" />
            <div className="ml-[35px] mt-[4px] h-[119px] w-[258px] border border-[#bcbcbc] bg-white">
              <div className="flex h-[19px] items-center bg-[#308cc6] font-bold text-white">
                <span className="ml-[6px] flex w-[10px] justify-center"><span className="h-0 w-0 border-x-[4px] border-t-[4px] border-x-transparent border-t-[#123]" /></span>
                <span className="ml-[7px] h-[16px] w-[16px] border border-[#6a3a4a] bg-[#95505f]" />
                <span className="ml-[6px]">Fill</span>
              </div>
              <div className="flex h-[19px] items-center">
                <span className="ml-[43px] h-[16px] w-[16px] border border-[#444] bg-[#c23b3b]" />
                <span className="ml-[6px]">Simple fill</span>
              </div>
            </div>
            <div className="ml-[6px] grid h-fit grid-cols-[28px_28px] gap-x-[6px] gap-y-[4px]">
              <Btn><svg width="15" height="15" viewBox="0 0 15 15"><path d="M5 1h5v4h4v5h-4v4H5v-4H1V5h4z" fill="#d6ecd6" stroke="#2d8a3c" /></svg></Btn>
              <Btn off><span className="h-0 w-0 border-x-[7px] border-b-[10px] border-x-transparent border-b-[#cfcfcf]" /></Btn>
              <Btn off><span className="h-[5px] w-[14px] border border-[#c8c8c8] bg-[#e8e8e8]" /></Btn>
              <Btn off><span className="h-0 w-0 border-x-[7px] border-t-[10px] border-x-transparent border-t-[#cfcfcf]" /></Btn>
              <Btn off><span className="h-[13px] w-[14px] border border-[#c8c8c8] bg-[#e4e4e4]" /></Btn>
              <Btn off><svg width="14" height="16" viewBox="0 0 14 16"><path d="M3 8V5a4 4 0 0 1 8 0" fill="none" stroke="#ccc" strokeWidth="2" /><rect x="1" y="8" width="12" height="8" rx="1" fill="#d8d4c8" /></svg></Btn>
            </div>
          </div>
          <div className="mt-[10px] flex h-[24px] items-center">
            <span className="w-[50px]">Unit</span>
            <Combo w={391}>Millimeters</Combo>
          </div>
          <div className="mt-[1px] flex h-[23px] items-center">
            <span className="w-[50px]">Opacity</span>
            <div className="relative h-[6px] w-[288px] rounded-[3px] border border-[#2b6a9c] bg-[#3d9bdc]">
              <span className="absolute -top-[5px] right-0 h-[13px] w-[13px] rounded-[3px] border border-[#b5b5b5] bg-[#fafafa]" />
            </div>
            <span className="ml-[4px]"><Spin w={99}>100.0 %</Spin></span>
          </div>
          <div className="mt-[1px] flex items-center">
            <span className="w-[50px]">Color</span>
            <div className="flex h-[27px] w-[380px] items-center rounded-[3px] border border-[#bdbdbd] bg-[#f4f4f4] px-[4px]">
              <span className="block h-[16px] w-full rounded-[2px] bg-[#c23b3b]" />
            </div>
            <div className="ml-px flex h-[27px] w-[11px] items-center justify-center rounded-[3px] border border-[#bdbdbd] bg-[#f4f4f4]"><Arrow dir="down" /></div>
          </div>
          <div className="mt-[68px] w-[441px] border-t border-[#b5b5b5]" />
          <div className="mt-[7px] flex items-center">
            <div className="flex h-[24px] w-[411px] items-center rounded-[3px] border border-[#bdbdbd] bg-white">
              <svg width="14" height="14" viewBox="0 0 14 14" className="ml-[10px]"><circle cx="6" cy="6" r="4.500" fill="none" stroke="#999" strokeWidth="1.200" /><path d="M9.500 9.500 13 13" stroke="#999" strokeWidth="1.400" /></svg>
              <span className="ml-[5px] flex-1">Favorites</span>
              <svg width="14" height="10" viewBox="0 0 14 10" className="mr-[9px]"><path d="M4 0h10v10H4L0 5z" fill="#aaa" /><path d="M7 3l4 4M11 3l-4 4" stroke="#fff" /></svg>
              <span className="flex h-full w-[20px] items-center justify-center border-l border-[#ccc]"><Arrow dir="down" /></span>
            </div>
            <span className="ml-[9px]"><Svg s={16}><Style /></Svg></span>
          </div>
          <div className="mt-[5px] flex h-[337px] w-[441px] border border-[#bcbcbc] bg-white">
            <div className="grid min-w-0 flex-1 grid-cols-[101px_101px_101px_101px] content-start overflow-hidden pl-[3px] pt-[20px]">
              {swatches.map((s) => (
                <div key={s.t} className="flex h-[119px] flex-col items-center text-center">
                  <div className="flex h-[55px] items-center justify-center">{s.i}</div>
                  <span className="mt-[14px] whitespace-pre-line text-[12px] leading-[15px]">{s.t}</span>
                </div>
              ))}
            </div>
            <Scroll h={337} thumb={215} />
          </div>
          <div className="mt-[7px] flex w-[441px] items-center">
            <Btn active w={24} h={24}><Svg s={15}><rect x="1" y="1" width="22" height="22" fill="#cfe0f2" /><g fill="#4e7fb5"><rect x="4" y="4" width="4" height="4" /><rect x="10" y="4" width="4" height="4" /><rect x="16" y="4" width="4" height="4" /><rect x="4" y="10" width="4" height="4" /><rect x="10" y="10" width="4" height="4" /><rect x="16" y="10" width="4" height="4" /><rect x="4" y="16" width="4" height="4" /><rect x="10" y="16" width="4" height="4" /><rect x="16" y="16" width="4" height="4" /></g></Svg></Btn>
            <span className="ml-[5px]"><Svg s={15}><rect x="1" y="1" width="22" height="22" fill="#cfe0f2" stroke="#8ab0d8" /><path d="M1 5h22M1 10h22M1 15h22M1 20h22M8 5v18" stroke="#6d9bc9" /></Svg></span>
            <span className="ml-auto"><Btn w={105} h={25}>Save Symbol...</Btn></span>
            <span className="ml-[7px]"><Btn w={84} h={25}>Advanced<span className="ml-[7px] h-0 w-0 border-x-[3px] border-t-[3px] border-x-transparent border-t-[#666]" /></Btn></span>
          </div>
          <div className="mt-[22px] flex h-[18px] items-center font-bold">
            <span className="ml-[5px] h-0 w-0 border-y-[5px] border-l-[6px] border-y-transparent border-l-[#333]" />
            <span className="ml-[12px]">Layer Rendering</span>
          </div>
          <div className="mt-[5px] flex items-center">
            <Btn w={24} h={24}><svg width="14" height="14" viewBox="0 0 24 24"><path d="M2 8l8-7v4c8 0 13 5 10 14-1 3-3 4-5 4 3-5 2-10-5-10v3z" fill="#e88030" /></svg></Btn>
            <span className="ml-[6px]"><Btn w={24} h={24}><svg width="14" height="14" viewBox="0 0 24 24"><path d="M22 8l-8-7v4C6 5 1 10 4 19c1 3 3 4 5 4-3-5-2-10 5-10v3z" fill="#62ab70" /></svg></Btn></span>
            <span className="ml-auto"><Check on /></span>
            <span className="ml-[5px]">Live update</span>
            <span className="ml-[13px]"><Btn w={80} h={25}><svg width="16" height="16" viewBox="0 0 16 16" className="mr-px"><path d="M1 9l3-2 2 3 8-9-6 15H5z" fill="#6a9a55" stroke="#4a7a3a" strokeWidth=".5" /></svg>Apply</Btn></span>
          </div>
        </div>
      </div>
    </div>
  );
}

function StatusBar() {
  return (
    <div className="flex h-[32px] shrink-0 items-center text-[11px]">
      <div className="ml-[4px] flex h-[25px] w-[268px] items-center rounded-[3px] border border-[#bdbdbd] bg-white text-[13px] text-[#7f7f7f]">
        <svg width="14" height="14" viewBox="0 0 14 14" className="ml-[8px]"><circle cx="6" cy="6" r="4.500" fill="none" stroke="#999" strokeWidth="1.200" /><path d="M9.500 9.500 13 13" stroke="#999" strokeWidth="1.400" /></svg>
        <span className="ml-[6px] whitespace-nowrap">Type to locate (Ctrl+K)</span>
      </div>
      <span className="ml-[9px] w-[705px] whitespace-nowrap">Toggles the editing state of the current layer</span>
      <span className="w-[63px]">Coordinate</span>
      <span className="flex h-[23px] w-[118px] items-center rounded-[3px] border border-[#bdbdbd] bg-white pl-[5px]">123.6952,13.1551</span>
      <span className="flex w-[33px] pl-[4px]"><Svg s={17}><path d="M5 2c6 4 10 8 14 18M19 2C13 6 9 10 5 20" fill="none" stroke="#333" strokeWidth="2.500" strokeDasharray="3 1" /></Svg></span>
      <span className="w-[33px]">Scale</span>
      <span className="flex h-[23px] w-[96px] items-center rounded-[3px] border border-[#bdbdbd] bg-white pl-[3px]">
        <span className="flex-1">1:351288</span>
        <span className="flex h-full w-[19px] items-center justify-center border-l border-[#ccc] bg-[#f2f2f2]"><Arrow dir="down" /></span>
      </span>
      <span className="flex w-[34px] justify-center"><Svg s={16}><path d="M7 11V7a5 5 0 0 1 10 0v4" fill="none" stroke="#555" strokeWidth="2" /><rect x="5" y="11" width="14" height="12" rx="1" fill="#555" /></Svg></span>
      <span className="w-[55px]">Magnifier</span>
      <Spin w={98}>100%</Spin>
      <span className="ml-[9px] w-[57px]">Rotation</span>
      <Spin w={94}>0.0 °</Spin>
      <span className="ml-[6px]"><Check on /></span>
      <span className="ml-[5px] w-[55px]">Render</span>
      <Svg s={16}><Globe c="#aaa" /></Svg>
      <span className="ml-[2px]">EPSG:4326</span>
      <span className="ml-[24px]"><Svg s={17}><path d="M2 3h20v15H12v5l-5-5H2z" fill="#555" /><circle cx="7" cy="10" r="1.500" fill="#fff" /><circle cx="12" cy="10" r="1.500" fill="#fff" /><circle cx="17" cy="10" r="1.500" fill="#fff" /></Svg></span>
      <svg width="10" height="10" viewBox="0 0 10 10" className="ml-auto mr-[2px] mt-[18px]"><g fill="#aaa"><rect x="8" y="0" width="1" height="1" /><rect x="5" y="3" width="1" height="1" /><rect x="8" y="3" width="1" height="1" /><rect x="2" y="6" width="1" height="1" /><rect x="5" y="6" width="1" height="1" /><rect x="8" y="6" width="1" height="1" /></g></svg>
    </div>
  );
}

export default function App() {
  return (
    <div className="h-[1055px] w-[1924px] overflow-hidden bg-white pl-[10px] pt-[8px] font-['DejaVu_Sans',sans-serif] text-[13px] text-[#2a2a2a]">
      <div className="flex h-[1038px] w-[1904px] flex-col rounded-t-[6px] border-x border-b border-[#8e8e8e] bg-[#eeeeee]">
        <div className="relative flex h-[37px] shrink-0 items-center justify-center rounded-t-[6px] bg-[#353535] font-['Noto_Sans',sans-serif] text-[12.500px] font-semibold text-[#f4f4f4]">
          *Untitled Project - QGIS [Bite-sized QGIS]
          <div className="absolute right-[8px] top-[9px] flex items-center gap-[20px]">
            <span className="mr-[3px] mt-[6px] h-[2px] w-[9px] bg-white" />
            <span className="relative h-[10px] w-[10px] before:absolute before:left-[4px] before:h-[10px] before:w-[2px] before:bg-white after:absolute after:top-[4px] after:h-[2px] after:w-[10px] after:bg-white" />
            <span className="flex h-[18px] w-[18px] items-center justify-center rounded-full bg-[#f4892c]">
              <svg width="9" height="9" viewBox="0 0 9 9"><path d="M1 1l7 7M8 1L1 8" stroke="#fff" strokeWidth="2" /></svg>
            </span>
          </div>
        </div>
        <div className="flex h-[21px] shrink-0 items-center gap-[15px] pl-[9px]">
          {menus.map(([a, b, c], i) => (
            <span key={i}>{a}<u>{b}</u>{c}</span>
          ))}
        </div>
        <div className="flex h-[40px] shrink-0 items-center border-y border-[#c4c4c4] bg-gradient-to-b from-[#f8f8f8] to-[#ebebeb]">
          <div className="relative">
            <span className="absolute left-[225px] top-[-1px] h-[32px] w-[33px] rounded-[3px] border border-[#b5b5b5] bg-[#dcdcdc]" />
            <div className="relative"><Toolbar items={tb1} /></div>
          </div>
        </div>
        <div className="flex h-[39px] shrink-0 items-center border-b border-[#c4c4c4] bg-gradient-to-b from-[#f8f8f8] to-[#ebebeb]">
          <Toolbar items={tb2} />
        </div>
        <div className="flex h-[16px] shrink-0 items-start border-b border-[#c4c4c4] bg-gradient-to-b from-[#f8f8f8] to-[#eeeeee] pl-[4px]">
          <span className="block h-[14px] w-[4px] border-x border-dotted border-[#b0b0b0]" />
        </div>
        <div className="flex min-h-0 flex-1">
          <div className="flex w-[388px] shrink-0 flex-col">
            <BrowserPanel />
            <LayersPanel />
          </div>
          <div className="ml-[3px] mt-px h-[851px] w-[1009px] shrink-0 border border-[#b8b8b8] bg-white">
            <MapView />
          </div>
          <StylingPanel />
        </div>
        <StatusBar />
      </div>
    </div>
  );
}
